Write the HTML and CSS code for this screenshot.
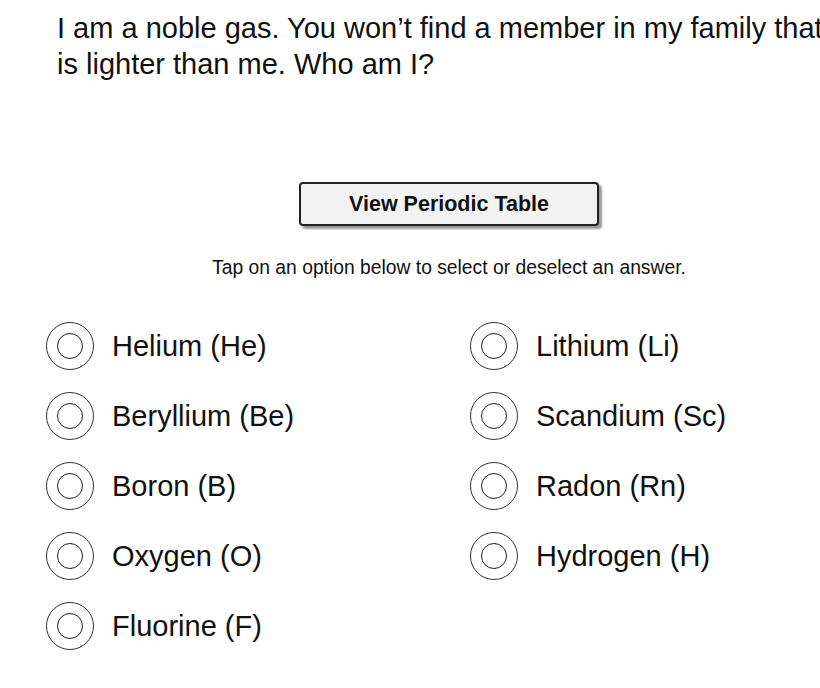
FILE: index.html
```html
<!DOCTYPE html>
<html lang="en">
<head>
  <meta charset="UTF-8">
  <meta name="viewport" content="width=device-width, initial-scale=1.0">
  <title>Question</title>
  <link rel="stylesheet" href="styles.css">
</head>
<body>
  <div class="quiz">
    <p class="question">I am a noble gas. You won’t find a member in my family that is lighter than me. Who am I?</p>

    <button class="table-btn">View Periodic Table</button>

    <p class="hint">Tap on an option below to select or deselect an answer.</p>

    <div class="options">
      <div class="option"><span class="radio"></span>Helium (He)</div>
      <div class="option"><span class="radio"></span>Lithium (Li)</div>
      <div class="option"><span class="radio"></span>Beryllium (Be)</div>
      <div class="option"><span class="radio"></span>Scandium (Sc)</div>
      <div class="option"><span class="radio"></span>Boron (B)</div>
      <div class="option"><span class="radio"></span>Radon (Rn)</div>
      <div class="option"><span class="radio"></span>Oxygen (O)</div>
      <div class="option"><span class="radio"></span>Hydrogen (H)</div>
      <div class="option"><span class="radio"></span>Fluorine (F)</div>
    </div>
  </div>
</body>
</html>
```

FILE: styles.css
```css
body {
  font-family: "Liberation Sans", Arial, sans-serif;
  margin: 0;
  padding: 0;
  background-color: #fff;
  color: #111;
  overflow: hidden;
}

.quiz {
  width: 806px;
  padding-left: 46px;
  display: flex;
  flex-direction: column;
  align-items: center;
}

/* the question runs past the right edge of the window */
.question {
  align-self: flex-start;
  width: 780px;
  margin: 10px 0 0 11px;
  font-size: 29px;
  line-height: 36px;
}

.table-btn {
  margin-top: 100px;
  width: 300px;
  height: 44px;
  font-family: inherit;
  font-size: 21.5px;
  font-weight: bold;
  color: #111;
  background-color: #f2f2f2;
  border: 2px solid #222;
  border-radius: 4px;
  box-shadow: 3px 3px 2px #999;
  cursor: pointer;
}

.hint {
  margin: 31px 0 0;
  font-size: 19.3px;
  line-height: 22px;
}

.options {
  align-self: stretch;
  margin-top: 43px;
  display: grid;
  grid-template-columns: 424px 1fr;
  row-gap: 22px;
}

.option {
  display: flex;
  align-items: center;
  gap: 18px;
  height: 48px;
  font-size: 29px;
  cursor: pointer;
}

.radio {
  width: 46px;
  height: 46px;
  border: 1px solid #333;
  border-radius: 50%;
  display: flex;
  align-items: center;
  justify-content: center;
  flex-shrink: 0;
}

.radio::after {
  content: "";
  width: 24px;
  height: 24px;
  border: 1.5px solid #222;
  border-radius: 50%;
}
```
